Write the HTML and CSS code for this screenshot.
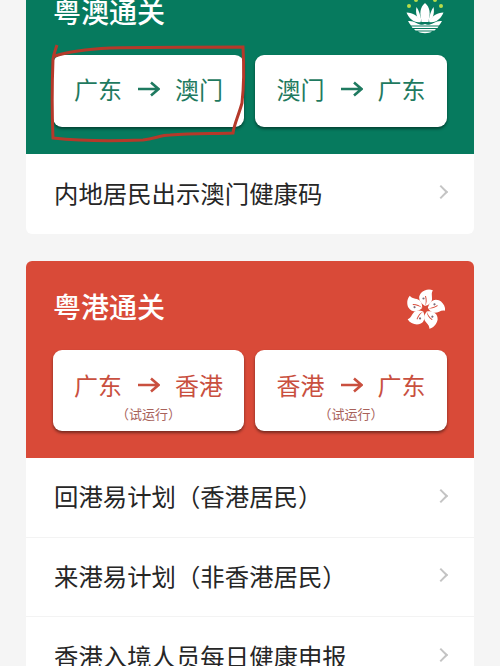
FILE: index.html
```html
<!DOCTYPE html>
<html lang="zh-CN">
<head>
<meta charset="utf-8">
<title>通关</title>
<link rel="stylesheet" href="styles.css">
</head>
<body>
<svg class="defs" aria-hidden="true">
  <defs>
    <path id="arrow" d="M1 8H21M14 1.500L21.500 8L14 14.500"/>
  </defs>
</svg>
<main class="page">
  <section class="card">
    <header class="panel panel-green">
      <div class="panel-head">
        <h2 class="panel-title">粤澳通关</h2>
        <svg class="flag" viewBox="0 0 40 40" aria-hidden="true">
          <g fill="#b9dc4a"><circle cx="4" cy="12" r="2"/><circle cx="11" cy="6" r="2"/><circle cx="20" cy="4" r="2"/><circle cx="30" cy="6" r="2"/><circle cx="36" cy="12" r="2"/></g>
          <g fill="#fff">
            <path d="M20 9C25 13 26 20 23 28H17C14 20 15 13 20 9Z"/>
            <path d="M11.500 13C14 16 15 21 17 28C12.500 26 10 20 11.500 13Z"/>
            <path d="M28.500 13C26 16 25 21 23 28C27.500 26 30 20 28.500 13Z"/>
            <path d="M1.500 18.500C8 18.500 13 22 16 28C9 29.500 4 24.500 1.500 18.500Z"/>
            <path d="M38.500 18.500C32 18.500 27 22 24 28C31 29.500 36 24.500 38.500 18.500Z"/>
            <path d="M3 27C10 26 15 33 20 30C25 33 30 26 37 27C36 29 35 30 34 31.500H6C5 30 4 29 3 27Z"/>
            <path d="M6.500 32.500H33.500L32.500 34H7.500Z"/>
            <path d="M9 35H31L29.500 36.500H10.500Z"/>
            <path d="M13 37.500H27C24 39.800 16 39.800 13 37.500Z"/>
          </g>
        </svg>
      </div>
      <div class="btn-row btn-row-green">
        <a class="btn"><span class="route"><span>广东</span><svg class="arrow" viewBox="0 0 23 16" aria-hidden="true"><use href="#arrow"/></svg><span>澳门</span></span></a>
        <a class="btn"><span class="route"><span>澳门</span><svg class="arrow" viewBox="0 0 23 16" aria-hidden="true"><use href="#arrow"/></svg><span>广东</span></span></a>
      </div>
      <svg class="scribble" viewBox="0 0 200 100" aria-hidden="true">
        <path d="M7 0C5 6 4 8 3 14C2 40 2 70 3 93C30 96 70 96 93 95C105 94 110 90 120 90C145 88 165 89 183 88C184 80 188 72 192 58C194 40 194 20 193 2C150 2 100 2 60 3C40 4 20 6 5 11"/>
      </svg>
    </header>
    <a class="row"><span>内地居民出示澳门健康码</span><i class="chev"></i></a>
  </section>
  <section class="card">
    <header class="panel panel-red">
      <div class="panel-head">
        <h2 class="panel-title">粤港通关</h2>
        <svg class="flag" viewBox="-20 -20 40 40" aria-hidden="true">
          <defs>
            <g id="petal">
              <path fill="#fff" d="M0 -3C-5 -6 -8 -11 -4 -16C-1 -19 4 -20.500 8 -18.500C5 -15 9 -10 5.500 -6C4 -4.500 2 -3.500 0 -3Z"/>
              <path fill="#d94a38" d="M0 -3C1 -6 1 -9 0 -13L1 -13C2 -9 2 -6 0 -3Z"/>
              <circle fill="#7c6a78" cx="-1.500" cy="-10.500" r="1.100"/>
            </g>
          </defs>
          <use href="#petal"/>
          <use href="#petal" transform="rotate(72)"/>
          <use href="#petal" transform="rotate(144)"/>
          <use href="#petal" transform="rotate(216)"/>
          <use href="#petal" transform="rotate(288)"/>
        </svg>
      </div>
      <div class="btn-row">
        <a class="btn btn-tall"><span class="route"><span>广东</span><svg class="arrow" viewBox="0 0 23 16" aria-hidden="true"><use href="#arrow"/></svg><span>香港</span></span><small class="note">（试运行）</small></a>
        <a class="btn btn-tall"><span class="route"><span>香港</span><svg class="arrow" viewBox="0 0 23 16" aria-hidden="true"><use href="#arrow"/></svg><span>广东</span></span><small class="note">（试运行）</small></a>
      </div>
    </header>
    <a class="row"><span>回港易计划（香港居民）</span><i class="chev"></i></a>
    <a class="row"><span>来港易计划（非香港居民）</span><i class="chev"></i></a>
    <a class="row"><span>香港入境人员每日健康申报</span><i class="chev"></i></a>
  </section>
</main>
</body>
</html>
```
FILE: styles.css
```css
* { box-sizing: border-box; }
html, body { margin: 0; height: 666px; overflow: hidden; }
body {
  background: #f5f5f5;
  font-family: "Roboto", "Noto Sans CJK SC", sans-serif;
}
.defs { display: none; }
.page {
  display: flex;
  flex-direction: column;
  gap: 27.500px;
  margin: -34px 26px 0;
}
.card {
  background: #fff;
  border-radius: 6px;
  overflow: hidden;
  flex: none;
}
.panel {
  position: relative;
  padding: 24px 27px 27px;
  color: #fff;
}
.panel-green { background: #067a5e; --accent: #1f7a60; --note: #1f7a60; }
.panel-red { background: #d94a38; --accent: #c9503f; --note: #a8625a; }
.panel-head {
  display: flex;
  align-items: center;
  justify-content: space-between;
  height: 48px;
  margin-bottom: 17px;
}
.panel-title {
  margin: 0;
  font-size: 28px;
  line-height: 48px;
  font-weight: 500;
}
.flag {
  width: 40px;
  height: 40px;
  margin-right: 2px;
  flex: none;
}
.btn-row {
  display: grid;
  grid-template-columns: 191px 192px;
  gap: 11px;
}
.btn {
  background: #fff;
  border-radius: 9px;
  box-shadow: 0 2px 3px rgba(0, 0, 0, 0.45);
  display: flex;
  flex-direction: column;
  align-items: center;
  justify-content: center;
  height: 72px;
  color: var(--accent);
}
.btn-tall {
  height: 81px;
  padding-top: 12px;
}
.route {
  display: flex;
  align-items: center;
  gap: 15px;
  font-size: 24px;
  line-height: 34px;
  font-weight: 400;
}
.arrow {
  width: 23px;
  height: 16px;
  margin-bottom: 4px;
  fill: none;
  stroke: currentColor;
  stroke-width: 2.600;
  flex: none;
}
.note {
  font-size: 13px;
  line-height: 18px;
  color: var(--note);
  margin-top: 2px;
}
.scribble {
  position: absolute;
  left: 24px;
  top: 79px;
  width: 200px;
  height: 100px;
  overflow: visible;
}
.scribble path {
  fill: none;
  stroke: #b5392a;
  stroke-width: 3;
}
.row {
  display: flex;
  align-items: center;
  justify-content: space-between;
  height: 79.500px;
  padding: 0 26px 3px 28px;
  font-size: 24.400px;
  color: #262626;
  border-bottom: 1px solid #f3f3f3;
}
.row:last-child { border-bottom: 0; }
.chev {
  width: 10px;
  height: 10px;
  border-top: 2.500px solid #c4c4c4;
  border-right: 2.500px solid #c4c4c4;
  transform: rotate(45deg);
  margin-right: 2px;
}
```
